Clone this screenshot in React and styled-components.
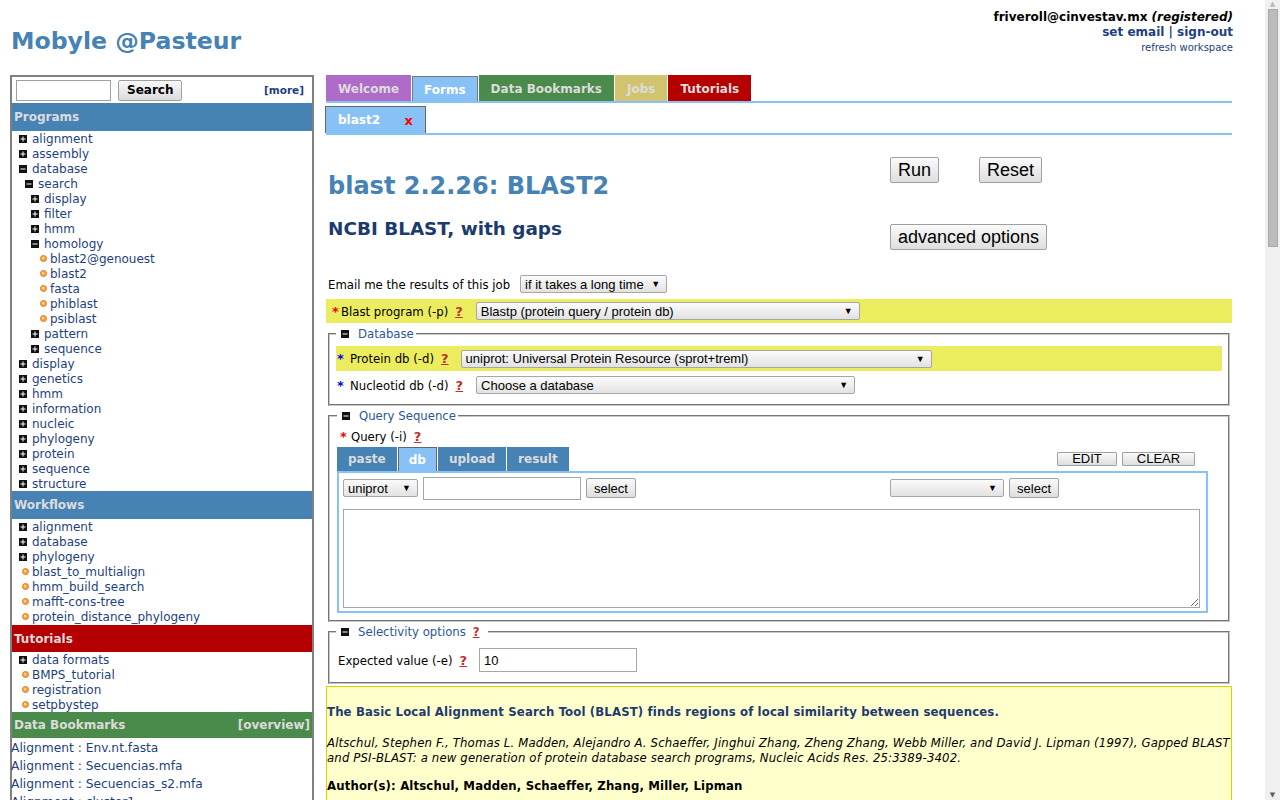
import styled, { createGlobalStyle } from 'styled-components';

const GlobalStyle = createGlobalStyle`
  html, body {
    margin: 0;
    padding: 0;
    overflow: hidden;
    background: #fff;
  }
  body {
    font-family: "DejaVu Sans", Verdana, sans-serif;
    font-size: 13px;
    color: #000;
  }
`;

const LINK = '#1e3f80';
const STEEL = '#4682b4';
const SKY = '#87c1f5';

const Screen = styled.div`
  display: flex;
  width: 1280px;
  height: 800px;
  overflow: hidden;
`;

const Page = styled.div`
  width: 1265px;
  flex: none;
  height: 800px;
  overflow: hidden;
`;

/* fake browser scrollbar */
const Scrollbar = styled.div`
  width: 15px;
  flex: none;
  background: #f0f0f0;
  display: flex;
  flex-direction: column;
  align-items: center;
`;

const ScrollArrow = styled.div`
  height: 9px;
  font-size: 7px;
  line-height: 9px;
  color: ${({ $dim }) => ($dim ? '#b8b8b8' : '#606060')};
`;

const ScrollThumb = styled.div`
  width: 10px;
  height: 238px;
  background: #bcbcbc;
  border: 1px solid #a9a9a9;
  box-sizing: border-box;
`;

const ScrollTrack = styled.div`
  flex: 1;
`;

const Header = styled.div`
  display: flex;
  justify-content: space-between;
  height: 75px;
  padding: 0 32px 0 11px;
`;

const SiteTitle = styled.h1`
  margin: 0;
  padding-top: 27px;
  font-size: 23.6px;
  font-weight: bold;
  color: ${STEEL};
  line-height: 28px;
`;

const UserBox = styled.div`
  text-align: right;
  padding-top: 10px;
`;

const UserLine = styled.div`
  font-size: ${({ $small }) => ($small ? '10px' : '12px')};
  font-weight: ${({ $small }) => ($small ? 'normal' : 'bold')};
  color: ${({ $dark }) => ($dark ? '#000' : LINK)};
  line-height: ${({ $small }) => ($small ? '16px' : '15px')};

  em {
    font-style: italic;
  }
`;

const Body = styled.div`
  display: flex;
  gap: 12px;
  padding-left: 10px;
`;

/* ---------- sidebar ---------- */

const Sidebar = styled.div`
  width: 304px;
  flex: none;
  border: 2px solid #808080;
  border-bottom: none;
  box-sizing: border-box;
  height: 740px;
`;

const SearchRow = styled.div`
  display: flex;
  align-items: center;
  height: 26px;
  padding: 0 8px 0 4px;
`;

const SearchInput = styled.input`
  width: 95px;
  height: 21px;
  box-sizing: border-box;
  border: 1px solid #a0a0a0;
  margin: 0;
`;

const SearchButton = styled.button`
  margin-left: 7px;
  height: 21px;
  padding: 0 8px;
  font-family: "DejaVu Sans", sans-serif;
  font-size: 12px;
  font-weight: bold;
  background: linear-gradient(#f8f8f8, #dcdcdc);
  border: 1px solid #a0a0a0;
  border-radius: 2px;
`;

const MoreLink = styled.span`
  margin-left: auto;
  font-size: 10.5px;
  font-weight: bold;
  color: ${LINK};
`;

const SectionHead = styled.div`
  display: flex;
  justify-content: space-between;
  align-items: center;
  height: ${({ $h }) => $h || 28}px;
  padding: 0 2px 0 2px;
  background: ${({ $bg }) => $bg};
  color: #dcdcdc;
  font-size: 12px;
  font-weight: bold;
`;

const TreeList = styled.div`
  padding: ${({ $pad }) => $pad || '0'};
`;

const TreeRow = styled.div`
  display: flex;
  align-items: center;
  height: 15px;
  padding-left: ${({ $level }) => 7 + $level * 6}px;
  font-size: 12px;
  color: ${LINK};
  white-space: nowrap;
`;

const IconSlot = styled.span`
  width: 13px;
  flex: none;
  display: flex;
  align-items: center;
  padding-left: ${({ $bullet }) => ($bullet ? 3 : 0)}px;
  box-sizing: border-box;
`;

const BookmarkList = styled.div`
  padding-top: 1px;
`;

const BookmarkRow = styled.div`
  height: 18px;
  line-height: 18px;
  font-size: 12.25px;
  color: ${LINK};
  white-space: nowrap;
  margin-left: -1px;
`;

const BoxIcon = ({ open }) => (
  <svg width="8" height="8" viewBox="0 0 8 8">
    <rect x="0" y="0" width="8" height="8" fill="#111" />
    <rect x="1.5" y="3.5" width="5" height="1" fill="#fff" />
    {!open && <rect x="3.5" y="1.5" width="1" height="5" fill="#fff" />}
  </svg>
);

const Bullet = () => (
  <svg width="7" height="7" viewBox="0 0 7 7">
    <circle cx="3.5" cy="3.5" r="3" fill="#f2a94a" stroke="#e07a1a" strokeWidth="1" />
    <circle cx="3" cy="3" r="1.2" fill="#fbd08a" />
  </svg>
);

const Tree = ({ items }) =>
  items.map(([label, level, kind], i) => (
    <TreeRow key={i} $level={level}>
      <IconSlot $bullet={kind === 'leaf'}>
        {kind === 'leaf' ? <Bullet /> : <BoxIcon open={kind === 'open'} />}
      </IconSlot>
      {label}
    </TreeRow>
  ));

const PROGRAMS = [
  ['alignment', 0, 'closed'],
  ['assembly', 0, 'closed'],
  ['database', 0, 'open'],
  ['search', 1, 'open'],
  ['display', 2, 'closed'],
  ['filter', 2, 'closed'],
  ['hmm', 2, 'closed'],
  ['homology', 2, 'open'],
  ['blast2@genouest', 3, 'leaf'],
  ['blast2', 3, 'leaf'],
  ['fasta', 3, 'leaf'],
  ['phiblast', 3, 'leaf'],
  ['psiblast', 3, 'leaf'],
  ['pattern', 2, 'closed'],
  ['sequence', 2, 'closed'],
  ['display', 0, 'closed'],
  ['genetics', 0, 'closed'],
  ['hmm', 0, 'closed'],
  ['information', 0, 'closed'],
  ['nucleic', 0, 'closed'],
  ['phylogeny', 0, 'closed'],
  ['protein', 0, 'closed'],
  ['sequence', 0, 'closed'],
  ['structure', 0, 'closed'],
];

const WORKFLOWS = [
  ['alignment', 0, 'closed'],
  ['database', 0, 'closed'],
  ['phylogeny', 0, 'closed'],
  ['blast_to_multialign', 0, 'leaf'],
  ['hmm_build_search', 0, 'leaf'],
  ['mafft-cons-tree', 0, 'leaf'],
  ['protein_distance_phylogeny', 0, 'leaf'],
];

const TUTORIALS = [
  ['data formats', 0, 'closed'],
  ['BMPS_tutorial', 0, 'leaf'],
  ['registration', 0, 'leaf'],
  ['setpbystep', 0, 'leaf'],
];

const BOOKMARKS = [
  'Alignment : Env.nt.fasta',
  'Alignment : Secuencias.mfa',
  'Alignment : Secuencias_s2.mfa',
  'Alignment : cluster1',
];

/* ---------- main ---------- */

const Main = styled.div`
  width: 906px;
  flex: none;
`;

const TabBar = styled.div`
  display: flex;
  align-items: flex-end;
  gap: 1px;
  height: 26px;
  border-bottom: 2px solid ${SKY};
`;

const Tab = styled.div`
  height: ${({ $active }) => ($active ? 25 : 26)}px;
  display: flex;
  align-items: center;
  padding: 1px ${({ $active }) => ($active ? 11 : 12)}px 0;
  box-sizing: border-box;
  background: ${({ $bg }) => $bg};
  color: ${({ $active }) => ($active ? '#fff' : '#dcdcdc')};
  font-size: 12px;
  font-weight: bold;
  border: ${({ $active }) => ($active ? '1px solid #777' : 'none')};
  border-bottom: none;
`;

const SubTabBar = styled.div`
  display: flex;
  align-items: flex-end;
  height: 30px;
  border-bottom: 2px solid ${SKY};
`;

const SubTab = styled.div`
  width: 101px;
  height: 27px;
  box-sizing: border-box;
  margin-left: -1px;
  display: flex;
  align-items: center;
  justify-content: space-between;
  padding: 0 12px 0 12px;
  background: ${SKY};
  border: 1px solid #666;
  border-bottom: none;
  color: #fff;
  font-size: 12px;
  font-weight: bold;
`;

const CloseX = styled.span`
  color: #f00;
  font-size: 13px;
`;

const FormHead = styled.div`
  display: flex;
  height: 140px;
`;

const TitleCol = styled.div`
  width: 562px;
  padding-left: 2px;
  flex: none;
`;

const FormTitle = styled.h2`
  margin: 36px 0 0;
  font-size: 24px;
  line-height: 30px;
  font-weight: bold;
  color: ${STEEL};
`;

const FormSubtitle = styled.h3`
  margin: 17px 0 0;
  font-size: 18.4px;
  line-height: 22px;
  font-weight: bold;
  color: #1b3a6e;
`;

const ButtonCol = styled.div`
  display: flex;
  flex-direction: column;
  gap: 41px;
  padding-top: 22px;
`;

const ButtonRow = styled.div`
  display: flex;
  gap: 40px;
`;

const BigButton = styled.button`
  height: 26px;
  padding: 0 7px;
  font-family: "Liberation Sans", Arial, sans-serif;
  font-size: 18px;
  color: #000;
  background: linear-gradient(#fafafa, #dedede);
  border: 1px solid #a0a0a0;
  border-radius: 2px;
`;

const Condensed = styled.span`
  font-family: "DejaVu Sans Condensed", "DejaVu Sans", sans-serif;
  font-stretch: condensed;
  font-size: 13px;
`;

const EmailRow = styled.div`
  display: flex;
  align-items: center;
  gap: 10px;
  height: 18px;
  padding-left: 2px;
`;

const FakeSelect = styled.div`
  width: ${({ $w }) => $w}px;
  height: ${({ $h }) => $h || 18}px;
  box-sizing: border-box;
  flex: none;
  display: flex;
  align-items: center;
  justify-content: space-between;
  padding: 0 6px 0 4px;
  font-family: "Liberation Sans", Arial, sans-serif;
  font-size: 13px;
  color: #000;
  background: linear-gradient(#fbfbfb, #e2e2e2);
  border: 1px solid #a6a6a6;
  border-radius: 2px;
`;

const Arrow = styled.span`
  font-size: 9px;
`;

const Select = ({ w, h, children }) => (
  <FakeSelect $w={w} $h={h}>
    <span>{children}</span>
    <Arrow>▼</Arrow>
  </FakeSelect>
);

const ParamRow = styled.div`
  display: flex;
  align-items: center;
  height: ${({ $h }) => $h || 24}px;
  background: ${({ $hl }) => ($hl ? '#ecec5f' : 'transparent')};
  padding-left: ${({ $pl }) => $pl ?? 6}px;
  margin-top: ${({ $mt }) => $mt || 0}px;
`;

const Star = styled.span`
  color: ${({ $blue }) => ($blue ? '#0000f0' : '#e00')};
  font-size: 13px;
  width: ${({ $w }) => $w || 9}px;
  flex: none;
  font-weight: bold;
`;

const Help = styled.span`
  color: #c0302a;
  font-weight: bold;
  text-decoration: underline;
  margin: 0 ${({ $after }) => $after || 13}px 0 7px;
  font-size: 13px;
`;

const Fieldset = styled.fieldset`
  margin: ${({ $mt }) => $mt || 0}px 2px 0;
  padding: ${({ $pad }) => $pad || '4px 6px 8px'};
  border: 2px groove #c8c8c8;
  min-width: 0;
`;

const Legend = styled.legend`
  display: flex;
  align-items: center;
  gap: 9px;
  padding: 0 2px 0 5px;
  color: #2b5797;
  line-height: 16px;
`;

const QueryTabs = styled.div`
  display: flex;
  align-items: flex-end;
  gap: 1px;
  height: 24px;
`;

const QTab = styled.div`
  height: 24px;
  box-sizing: border-box;
  display: flex;
  align-items: center;
  padding: 0 ${({ $active }) => ($active ? 10 : 11)}px;
  background: ${({ $active }) => ($active ? SKY : STEEL)};
  color: ${({ $active }) => ($active ? '#fff' : '#dcdcdc')};
  border: ${({ $active }) => ($active ? '1px solid #666' : 'none')};
  border-bottom: none;
  font-weight: bold;
  font-size: 12px;
`;

const SmallButtons = styled.div`
  margin-left: auto;
  display: flex;
  gap: 5px;
  align-self: flex-start;
  padding-top: 5px;
  margin-right: 27px;
`;

const SmallButton = styled.button`
  height: 14px;
  width: ${({ $w }) => $w}px;
  padding: 0;
  font-family: "Liberation Sans", Arial, sans-serif;
  font-size: 13px;
  line-height: 12px;
  color: #000;
  background: linear-gradient(#fafafa, #dedede);
  border: 1px solid #a0a0a0;
  border-radius: 1px;
`;

const Panel = styled.div`
  width: 871px;
  box-sizing: border-box;
  border: 2px solid ${SKY};
  padding: 3px 6px 3px 4px;
`;

const PanelRow = styled.div`
  display: flex;
  align-items: center;
  gap: 5px;
  height: 24px;
`;

const Spacer = styled.div`
  flex: ${({ $w }) => ($w ? 'none' : 1)};
  width: ${({ $w }) => $w || 0}px;
`;

const TextInput = styled.input`
  width: ${({ $w }) => $w}px;
  height: ${({ $h }) => $h || 23}px;
  box-sizing: border-box;
  border: 1px solid #a6a6a6;
  margin: 0;
  padding: 0 4px;
  font-family: "Liberation Sans", Arial, sans-serif;
  font-size: 13px;
`;

const SelectBtn = styled.button`
  height: 20px;
  padding: 0 7px;
  font-family: "Liberation Sans", Arial, sans-serif;
  font-size: 13px;
  color: #000;
  background: linear-gradient(#fafafa, #dedede);
  border: 1px solid #a0a0a0;
  border-radius: 2px;
`;

const SeqArea = styled.textarea`
  display: block;
  width: 857px;
  height: 99px;
  box-sizing: border-box;
  margin-top: 9px;
  border: 1px solid #a6a6a6;
  resize: vertical;
`;

const InfoBox = styled.div`
  margin-top: 2px;
  height: 200px;
  background: #ffffcc;
  border: 1px solid #d4d400;
  padding: 17px 0 0 0;
  font-family: "DejaVu Sans Condensed", "DejaVu Sans", sans-serif;
  font-stretch: condensed;
  font-size: 13px;
  letter-spacing: 0.15px;
`;

const InfoPara = styled.p`
  margin: 0 0 ${({ $mb }) => $mb || 14}px;
  line-height: 15px;
  font-weight: ${({ $bold }) => ($bold ? 'bold' : 'normal')};
  font-style: ${({ $italic }) => ($italic ? 'italic' : 'normal')};
  color: ${({ $blue }) => ($blue ? '#1f3a6f' : '#000')};
`;

export default function App() {
  return (
    <Screen>
      <GlobalStyle />
      <Page>
        <Header>
          <SiteTitle>Mobyle @Pasteur</SiteTitle>
          <UserBox>
            <UserLine $dark>
              friveroll@cinvestav.mx <em>(registered)</em>
            </UserLine>
            <UserLine>set email | sign-out</UserLine>
            <UserLine $small>refresh workspace</UserLine>
          </UserBox>
        </Header>

        <Body>
          <Sidebar>
            <SearchRow>
              <SearchInput />
              <SearchButton>Search</SearchButton>
              <MoreLink>[more]</MoreLink>
            </SearchRow>
            <SectionHead $bg={STEEL}>Programs</SectionHead>
            <TreeList>
              <Tree items={PROGRAMS} />
            </TreeList>
            <SectionHead $bg={STEEL}>Workflows</SectionHead>
            <TreeList $pad="0 0 1px">
              <Tree items={WORKFLOWS} />
            </TreeList>
            <SectionHead $bg="#b40000" $h={27}>Tutorials</SectionHead>
            <TreeList $pad="0">
              <Tree items={TUTORIALS} />
            </TreeList>
            <SectionHead $bg="#4a8a4a" $h={26}>
              <span>Data Bookmarks</span>
              <span>[overview]</span>
            </SectionHead>
            <BookmarkList>
              {BOOKMARKS.map((b) => (
                <BookmarkRow key={b}>{b}</BookmarkRow>
              ))}
            </BookmarkList>
          </Sidebar>

          <Main>
            <TabBar>
              <Tab $bg="#af6bc8">Welcome</Tab>
              <Tab $bg={SKY} $active>
                Forms
              </Tab>
              <Tab $bg="#4a8a4a">Data Bookmarks</Tab>
              <Tab $bg="#d2c46e">Jobs</Tab>
              <Tab $bg="#b60000">Tutorials</Tab>
            </TabBar>
            <SubTabBar>
              <SubTab>
                blast2
                <CloseX>x</CloseX>
              </SubTab>
            </SubTabBar>

            <FormHead>
              <TitleCol>
                <FormTitle>blast 2.2.26: BLAST2</FormTitle>
                <FormSubtitle>NCBI BLAST, with gaps</FormSubtitle>
              </TitleCol>
              <ButtonCol>
                <ButtonRow>
                  <BigButton>Run</BigButton>
                  <BigButton>Reset</BigButton>
                </ButtonRow>
                <div>
                  <BigButton>advanced options</BigButton>
                </div>
              </ButtonCol>
            </FormHead>

            <EmailRow>
              <Condensed>Email me the results of this job</Condensed>
              <Select w={147}>if it takes a long time</Select>
            </EmailRow>

            <ParamRow $hl $mt={6}>
              <Star>*</Star>
              <Condensed>Blast program (-p)</Condensed>
              <Help>?</Help>
              <Select w={384}>Blastp (protein query / protein db)</Select>
            </ParamRow>

            <Fieldset $mt={3} $pad="4px 6px 7px">
              <Legend>
                <BoxIcon open />
                <Condensed>Database</Condensed>
              </Legend>
              <ParamRow $hl $h={25} $pl={1}>
                <Star $blue $w={13}>*</Star>
                <Condensed>Protein db (-d)</Condensed>
                <Help $after={12}>?</Help>
                <Select w={471}>uniprot: Universal Protein Resource (sprot+treml)</Select>
              </ParamRow>
              <ParamRow $h={24} $pl={1} $mt={2}>
                <Star $blue $w={13}>*</Star>
                <Condensed>Nucleotid db (-d)</Condensed>
                <Help>?</Help>
                <Select w={379}>Choose a database</Select>
              </ParamRow>
            </Fieldset>

            <Fieldset $mt={2} $pad="0 6px 7px 7px">
              <Legend>
                <BoxIcon open />
                <Condensed>Query Sequence</Condensed>
              </Legend>
              <ParamRow $h={21} $pl={3} $mt={2}>
                <Star $w={11}>*</Star>
                <Condensed>Query (-i)</Condensed>
                <Help>?</Help>
              </ParamRow>
              <QueryTabs>
                <QTab>paste</QTab>
                <QTab $active>db</QTab>
                <QTab>upload</QTab>
                <QTab>result</QTab>
                <SmallButtons>
                  <SmallButton $w={60}>EDIT</SmallButton>
                  <SmallButton $w={73}>CLEAR</SmallButton>
                </SmallButtons>
              </QueryTabs>
              <Panel>
                <PanelRow>
                  <Select w={75}>uniprot</Select>
                  <TextInput $w={158} />
                  <SelectBtn>select</SelectBtn>
                  <Spacer />
                  <Select w={114}>&nbsp;</Select>
                  <SelectBtn>select</SelectBtn>
                  <Spacer $w={136} />
                </PanelRow>
                <SeqArea />
              </Panel>
            </Fieldset>

            <Fieldset $mt={2} $pad="8px 6px 10px">
              <Legend>
                <BoxIcon open />
                <Condensed>
                  Selectivity options<Help $after={6}>?</Help>
                </Condensed>
              </Legend>
              <ParamRow $h={24} $pl={2}>
                <Condensed>Expected value (-e)</Condensed>
                <Help $after={12}>?</Help>
                <TextInput $w={158} $h={24} defaultValue="10" />
              </ParamRow>
            </Fieldset>

            <InfoBox>
              <InfoPara $bold $blue $mb={16}>
                The Basic Local Alignment Search Tool (BLAST) finds regions of local similarity between sequences.
              </InfoPara>
              <InfoPara $italic $mb={13}>
                Altschul, Stephen F., Thomas L. Madden, Alejandro A. Schaeffer, Jinghui Zhang, Zheng Zhang, Webb
                Miller, and David J. Lipman (1997), Gapped BLAST and PSI-BLAST: a new generation of protein database
                search programs, Nucleic Acids Res. 25:3389-3402.
              </InfoPara>
              <InfoPara $bold>Author(s): Altschul, Madden, Schaeffer, Zhang, Miller, Lipman</InfoPara>
            </InfoBox>
          </Main>
        </Body>
      </Page>
      <Scrollbar>
        <ScrollArrow $dim>▲</ScrollArrow>
        <ScrollThumb />
        <ScrollTrack />
        <ScrollArrow>▼</ScrollArrow>
      </Scrollbar>
    </Screen>
  );
}
